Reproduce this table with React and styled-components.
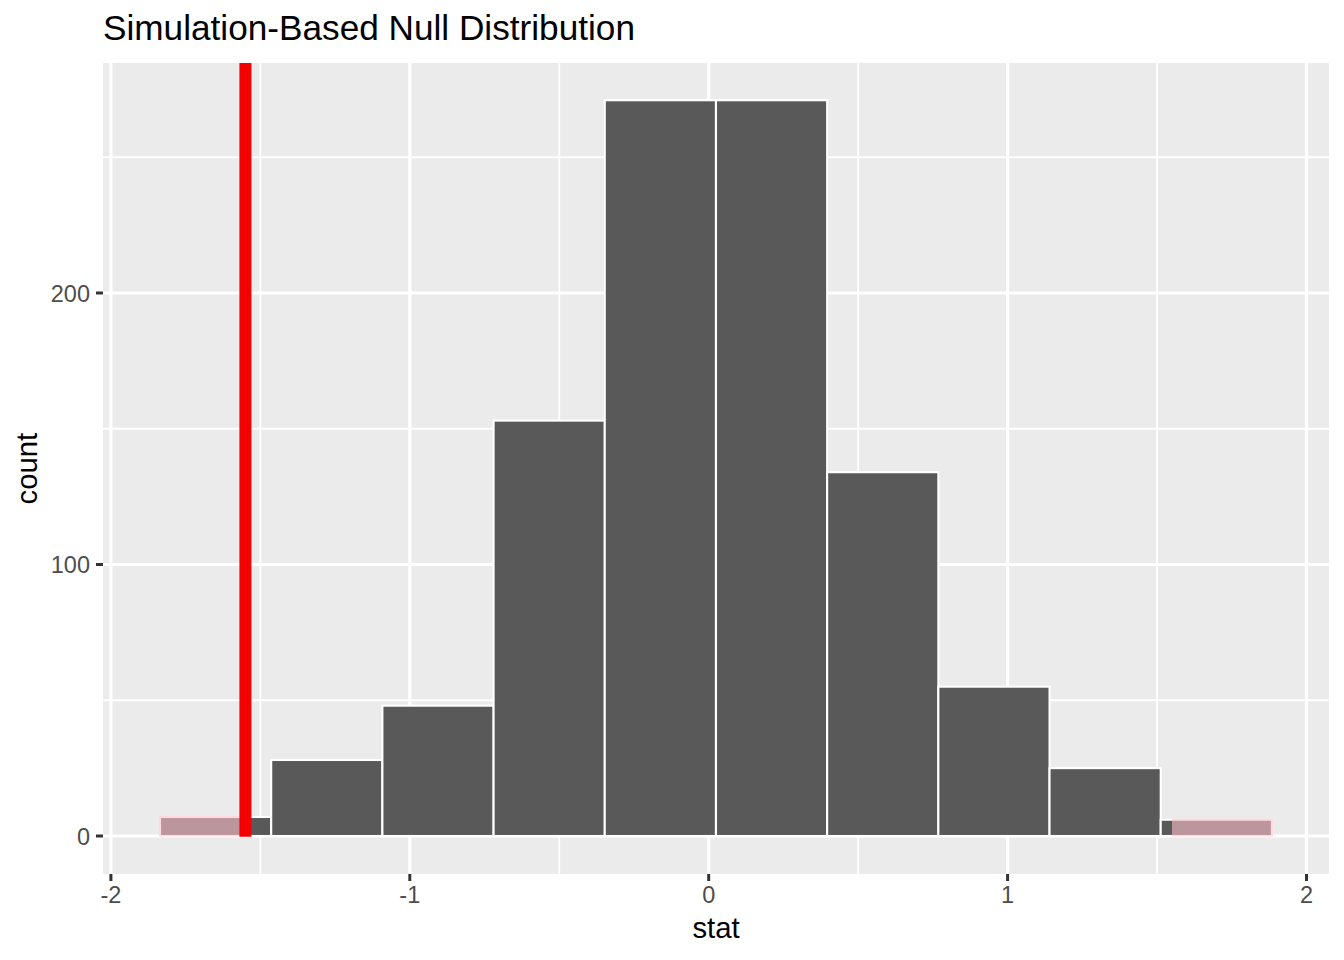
import React from "react";
import styled, { createGlobalStyle } from "styled-components";

const GlobalStyle = createGlobalStyle`
  html, body {
    margin: 0;
    padding: 0;
    background: #ffffff;
  }
  body {
    font-family: "Liberation Sans", Arial, sans-serif;
  }
`;

// plot geometry (page pixels)
const PANEL = { left: 103, top: 63, right: 1329, bottom: 874 };
const X0 = 708.7;
const XS = 298.9;
const Y0 = 836;
const YS = 2.715;
const px = (v) => X0 + v * XS;
const py = (c) => Y0 - c * YS;

const BIN_START = -1.8357;
const BIN_WIDTH = 0.372;
const counts = [7, 28, 48, 153, 271, 271, 134, 55, 25, 6];
const OBS_STAT = -1.55;

const xMajor = [-2, -1, 0, 1, 2];
const xMinor = [-1.5, -0.5, 0.5, 1.5];
const yMajor = [0, 100, 200];
const yMinor = [50, 150, 250];

const Figure = styled.div`
  width: 1344px;
  height: 960px;
  display: grid;
  grid-template-columns: 44px 1300px;
  grid-template-rows: 55px 855px 50px;
  background: #ffffff;
`;

const Title = styled.h1`
  grid-column: 1 / -1;
  margin: 0;
  padding: 10px 0 0 103px;
  font-size: 35.2px;
  font-weight: 400;
  line-height: 1;
  color: #000000;
`;

const YTitleCell = styled.div`
  display: flex;
  align-items: center;
  justify-content: center;
  padding: 0 0 28px 9px;
`;

const AxisTitle = styled.span`
  display: block;
  white-space: nowrap;
  font-size: 29.3px;
  line-height: 1;
  color: #000000;
  transform: ${(p) => (p.$vertical ? "rotate(-90deg)" : "none")};
`;

const XTitleCell = styled.div`
  grid-column: 2;
  margin-left: 59px;
  width: 1226px;
  padding-top: 3px;
  text-align: center;
`;

const ChartSvg = styled.svg`
  display: block;
  grid-column: 2;
`;

const PanelBg = styled.rect`
  fill: #ebebeb;
`;

const GridLine = styled.line`
  stroke: #ffffff;
  stroke-width: ${(p) => (p.$minor ? 1.8 : 3.2)}px;
`;

const Bar = styled.rect`
  fill: #595959;
  stroke: #ffffff;
  stroke-width: 2.1px;
`;

const Shade = styled.rect`
  fill: #ffc0cb;
  opacity: 0.6;
`;

const ObsLine = styled.rect`
  fill: #f50000;
`;

const Tick = styled.line`
  stroke: #333333;
  stroke-width: 3px;
`;

const TickLabel = styled.text`
  font-family: "Liberation Sans", Arial, sans-serif;
  font-size: 23.5px;
  fill: #4d4d4d;
`;

const bars = counts.map((c, i) => {
  const x = px(BIN_START + i * BIN_WIDTH);
  return { x, w: BIN_WIDTH * XS, y: py(c), h: Y0 - py(c) };
});

const Chart = () => (
  <ChartSvg width="1300" height="855" viewBox="44 55 1300 855">
    <defs>
      <clipPath id="shade-left">
        <rect x={PANEL.left} y={PANEL.top} width={px(OBS_STAT) - PANEL.left} height={PANEL.bottom - PANEL.top} />
      </clipPath>
      <clipPath id="shade-right">
        <rect x={px(-OBS_STAT)} y={PANEL.top} width={PANEL.right - px(-OBS_STAT)} height={PANEL.bottom - PANEL.top} />
      </clipPath>
    </defs>

    <PanelBg x={PANEL.left} y={PANEL.top} width={PANEL.right - PANEL.left} height={PANEL.bottom - PANEL.top} />

    {yMinor.map((v) => (
      <GridLine key={`ym${v}`} $minor x1={PANEL.left} x2={PANEL.right} y1={py(v)} y2={py(v)} />
    ))}
    {xMinor.map((v) => (
      <GridLine key={`xm${v}`} $minor x1={px(v)} x2={px(v)} y1={PANEL.top} y2={PANEL.bottom} />
    ))}
    {yMajor.map((v) => (
      <GridLine key={`yM${v}`} x1={PANEL.left} x2={PANEL.right} y1={py(v)} y2={py(v)} />
    ))}
    {xMajor.map((v) => (
      <GridLine key={`xM${v}`} x1={px(v)} x2={px(v)} y1={PANEL.top} y2={PANEL.bottom} />
    ))}

    {bars.map((b, i) => (
      <Bar key={i} x={b.x} y={b.y} width={b.w} height={b.h} />
    ))}

    {["shade-left", "shade-right"].map((id) => (
      <g key={id} clipPath={`url(#${id})`}>
        {bars.map((b, i) => (
          <Shade key={i} x={b.x - 1.05} y={b.y - 1.05} width={b.w + 2.1} height={b.h + 1.6} />
        ))}
      </g>
    ))}

    <ObsLine x={px(OBS_STAT) - 6} y={PANEL.top} width={12} height={Y0 + 0.7 - PANEL.top} />

    {yMajor.map((v) => (
      <g key={`yt${v}`}>
        <Tick x1={96} x2={PANEL.left} y1={py(v)} y2={py(v)} />
        <TickLabel x={90} y={py(v) + 8.6} textAnchor="end">
          {v}
        </TickLabel>
      </g>
    ))}
    {xMajor.map((v) => (
      <g key={`xt${v}`}>
        <Tick x1={px(v)} x2={px(v)} y1={PANEL.bottom} y2={881} />
        <TickLabel x={px(v)} y={903} textAnchor="middle">
          {String(v)}
        </TickLabel>
      </g>
    ))}
  </ChartSvg>
);

const App = () => (
  <>
    <GlobalStyle />
    <Figure>
      <Title>Simulation-Based Null Distribution</Title>
      <YTitleCell>
        <AxisTitle $vertical>count</AxisTitle>
      </YTitleCell>
      <Chart />
      <XTitleCell>
        <AxisTitle>stat</AxisTitle>
      </XTitleCell>
    </Figure>
  </>
);

export default App;
